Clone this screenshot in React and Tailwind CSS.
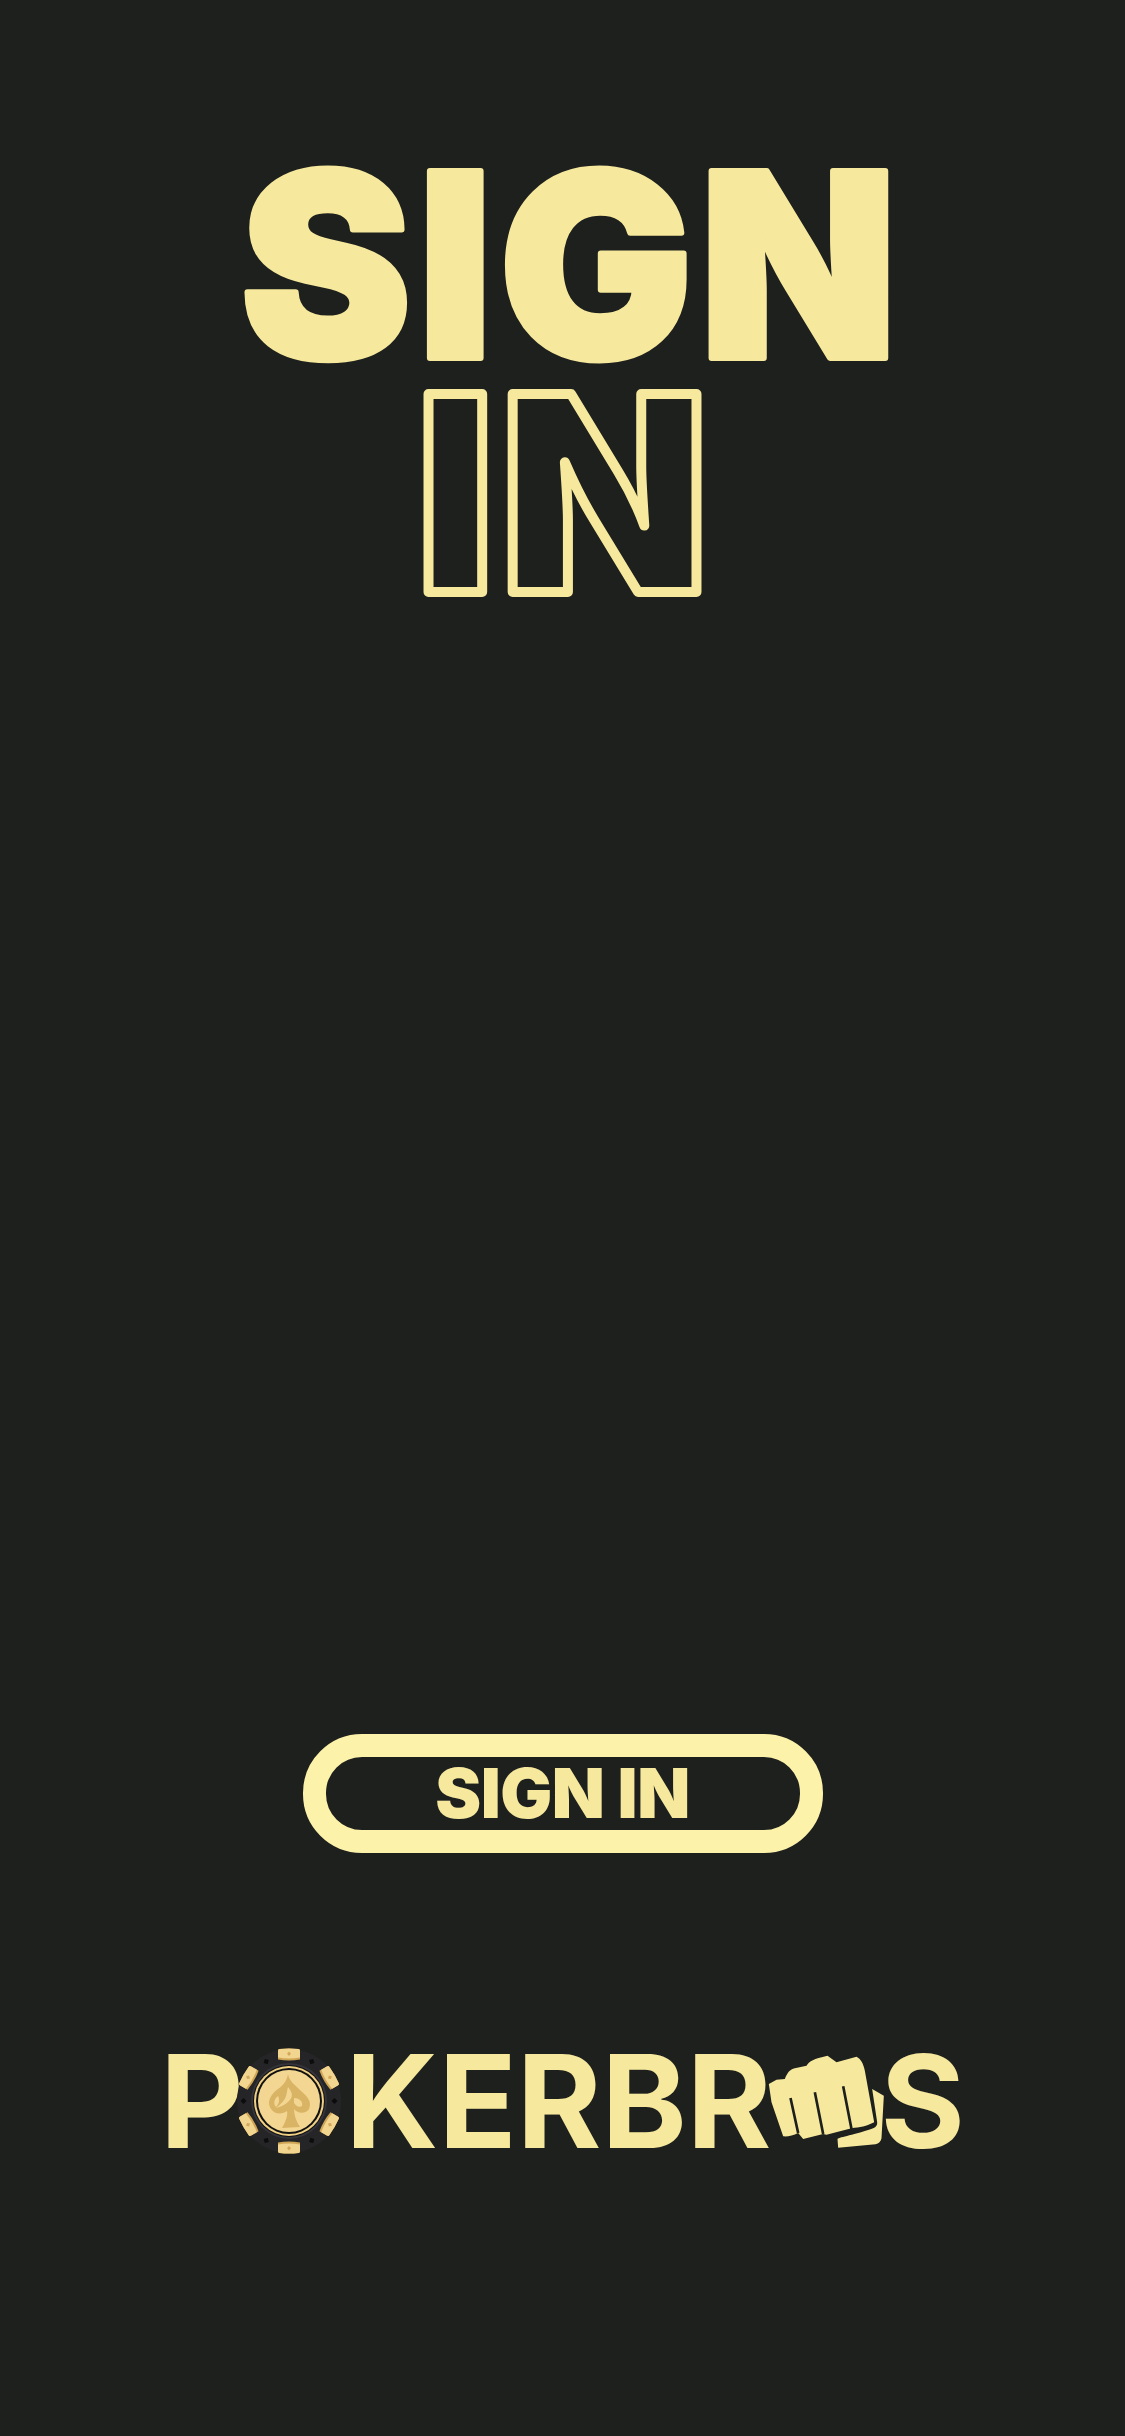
const Chip = () => {
  const tabs = [0, 60, 120, 180, 240, 300]
  const dots = [30, 90, 150, 210, 270, 330]
  return (
    <svg viewBox="-54 -54 108 108" className="h-[108px] w-[108px] shrink-0">
      <circle r="52" fill="#252527" />
      <circle r="38" fill="#34343a" />
      <circle r="36" fill="#111" />
      {tabs.map((a) => (
        <g key={a} transform={`rotate(${a})`}>
          <path d="M-9.5 -52 Q0 -53 9.5 -52 Q11 -52 11 -50 L11 -41.5 Q0 -39.5 -11 -41.5 L-11 -50 Q-11 -52 -9.5 -52 Z" fill="#cfa556" />
          <path d="M-9.5 -52 Q0 -53 9.5 -52 Q11 -52 11 -50 L11 -43.5 Q0 -41.5 -11 -43.5 L-11 -50 Q-11 -52 -9.5 -52 Z" fill="#f2d58f" />
          <path d="M0 -49.5 L2 -47.3 L0 -45 L-2 -47.3 Z" fill="#d2a95a" />
        </g>
      ))}
      {dots.map((a) => (
        <g key={a} transform={`rotate(${a}) translate(0 -45.5)`}>
          <path d="M0 -3 L3 0 L0 3 L-3 0 Z" fill="#0c0c0c" />
        </g>
      ))}
      <circle r="35" fill="#efcf84" />
      <circle r="33" fill="#111" />
      <circle r="31" fill="#f3d692" />
      <path
        d="M-1 -27 C0 -20 6 -16 12 -10 C19 -4 23 1 20 8 C17 13 9 13 5 8 C5 14 7 20 11 26 L-7 27 C-3 20 -1 14 -2 10 C-6 13 -14 14 -18 8 C-23 1 -18 -7 -11 -12 C-5 -16 -2 -21 -1 -27 Z"
        fill="#d9b465"
      />
      <path d="M-1 -14 C4 -8 4 -4 0 0 C-4 4 -9 6 -13 7 C-8 3 -4 -1 -3 -5 C-2 -8 -2 -11 -1 -14 Z" fill="#f3d692" />
      <path d="M5 -3 C10 -3 14 0 13 5 C10 7 7 5 5 2 Z" fill="#f3d692" />
      <path d="M-11 -5 C-15 -2 -16 3 -13 6 C-10 3 -9 -1 -11 -5 Z" fill="#f3d692" />
    </svg>
  )
}

const Fist = () => {
  return (
    <svg viewBox="80 45 350 285" className="-ml-[4px] h-[95px] w-[117px] shrink-0">
      <path
        d="M82 135 L105 122 L130 120 C138 100 145 92 160 88 L195 80 C205 65 215 60 258 50 L285 70 L345 53 C358 60 365 72 370 95 L398 250 C375 262 355 265 330 268 L255 287 L245 285 L185 300 L170 282 C155 290 140 293 125 292 L90 190 Z"
        fill="#f6e89c"
      />
      <path d="M147 177 L170 282 M220 160 L245 285 M305 142 L330 270" stroke="#1e201e" strokeWidth="8" fill="none" />
      <path
        d="M392 150 L427 170 L420 298 C418 308 412 314 402 316 L290 326 L288 300 C295 294 340 288 395 268 C404 264 408 258 407 250 Z"
        fill="#f6e89c"
      />
    </svg>
  )
}

const App = () => {
  return (
    <div className="flex h-[2436px] w-[1125px] flex-col items-center overflow-hidden bg-[#1e201e] font-['Inter',sans-serif] text-[#f6e89c]">
      <h1 className="mt-[150px] flex flex-col items-center gap-[10px] font-black">
        <svg viewBox="0 0 1125 220" className="h-[220px] w-[1125px] overflow-visible">
          <text x="572" y="208" textAnchor="middle" fontSize="257" letterSpacing="6.5" fill="#f6e89c" stroke="#f6e89c" strokeWidth="6" strokeLinejoin="round">
            SIGN
          </text>
        </svg>
        <svg viewBox="0 0 1125 220" className="h-[220px] w-[1125px] overflow-visible">
          <text x="565" y="212" textAnchor="middle" fontSize="272" letterSpacing="5" fill="none" stroke="#f6e89c" strokeWidth="10" strokeLinejoin="round">
            IN
          </text>
        </svg>
      </h1>

      <button className="mt-[1134px] flex h-[119px] w-[520px] items-center justify-center rounded-[59px] border-[23px] border-[#fdf2a9] text-[69px] font-black tracking-[-0.5px]">
        SIGN IN
      </button>

      <div className="mt-[194px] flex items-center text-[129px] font-bold leading-[108px]">
        <span className="-mr-[9px]">P</span>
        <Chip />
        <span className="ml-[3px]">KERBR</span>
        <Fist />
        <span className="-ml-[4px]">S</span>
      </div>
    </div>
  )
}

export default App
